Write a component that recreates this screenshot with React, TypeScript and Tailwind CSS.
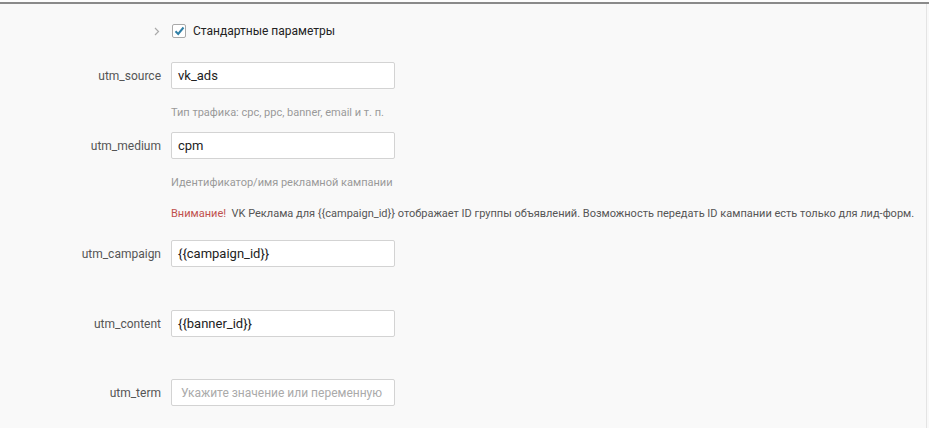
import React from "react";

const font = { fontFamily: "Roboto, 'Noto Sans', Arial, sans-serif" };

function Row({ label, value, placeholder, mt }: { label: string; value?: string; placeholder?: string; mt: string }) {
  return (
    <div className={`flex items-center ${mt}`}>
      <div className="w-[161px] text-right text-[12px] text-[#555]">{label}</div>
      <div className="ml-[10px] flex h-[27px] w-[224px] items-center whitespace-nowrap rounded-[2px] border border-[#d3d3d3] bg-white px-[6px]">
        {value ? (
          <span className="text-[13px] text-[#222]">{value}</span>
        ) : (
          <span className="pl-[3px] text-[12px] text-[#aaa]">{placeholder}</span>
        )}
      </div>
    </div>
  );
}

export default function App() {
  return (
    <div className="relative h-[428px] w-[929px] overflow-hidden bg-[#f9f9f9]" style={font}>
      <div className="h-[2px] bg-[#fdfdfd]" />
      <div className="border-t-2 border-[#8a8a8a]" />
      <div className="absolute right-[2px] top-[4px] bottom-0 w-px bg-[#e4e4e4]" />
      <div className="mt-[15px] flex h-[24px] items-center">
        <div className="flex w-[161px] justify-end pr-[1px]">
          <svg width="6" height="9" viewBox="0 0 6 9">
            <path d="M1 1 L4.5 4.5 L1 8" fill="none" stroke="#aaa" strokeWidth="1.2" />
          </svg>
        </div>
        <div className="ml-[11px] flex h-[14px] w-[14px] items-center justify-center rounded-[2px] border border-[#a9a9a9] bg-white">
          <svg width="11" height="10" viewBox="0 0 11 10">
            <path d="M1.5 5.2 L4.2 8 L9.5 1.5" fill="none" stroke="#2f7fa6" strokeWidth="2" />
          </svg>
        </div>
        <span className="ml-[7px] text-[12px] text-[#222]">Стандартные параметры</span>
      </div>
      <Row label="utm_source" value="vk_ads" mt="mt-[19px]" />
      <div className="ml-[171px] mt-[17px] h-[14px] whitespace-nowrap text-[11px] leading-[14px] text-[#999]">Тип трафика: cpc, ppc, banner, email и т. п.</div>
      <Row label="utm_medium" value="cpm" mt="mt-[12px]" />
      <div className="ml-[171px] mt-[17px] h-[14px] whitespace-nowrap text-[11px] leading-[14px] text-[#999]">Идентификатор/имя рекламной кампании</div>
      <div className="ml-[171px] mt-[17px] h-[14px] whitespace-nowrap text-[11px] leading-[14px] text-[#555]">
        <span className="text-[#c0504d]">Внимание!</span>
        {"\u00a0 "}VK Реклама для {"{{campaign_id}}"} отображает ID группы объявлений. Возможность передать ID кампании есть только для лид-форм.
      </div>
      <Row label="utm_campaign" value="{{campaign_id}}" mt="mt-[19px]" />
      <Row label="utm_content" value="{{banner_id}}" mt="mt-[43px]" />
      <Row label="utm_term" placeholder="Укажите значение или переменную" mt="mt-[42px]" />
    </div>
  );
}
